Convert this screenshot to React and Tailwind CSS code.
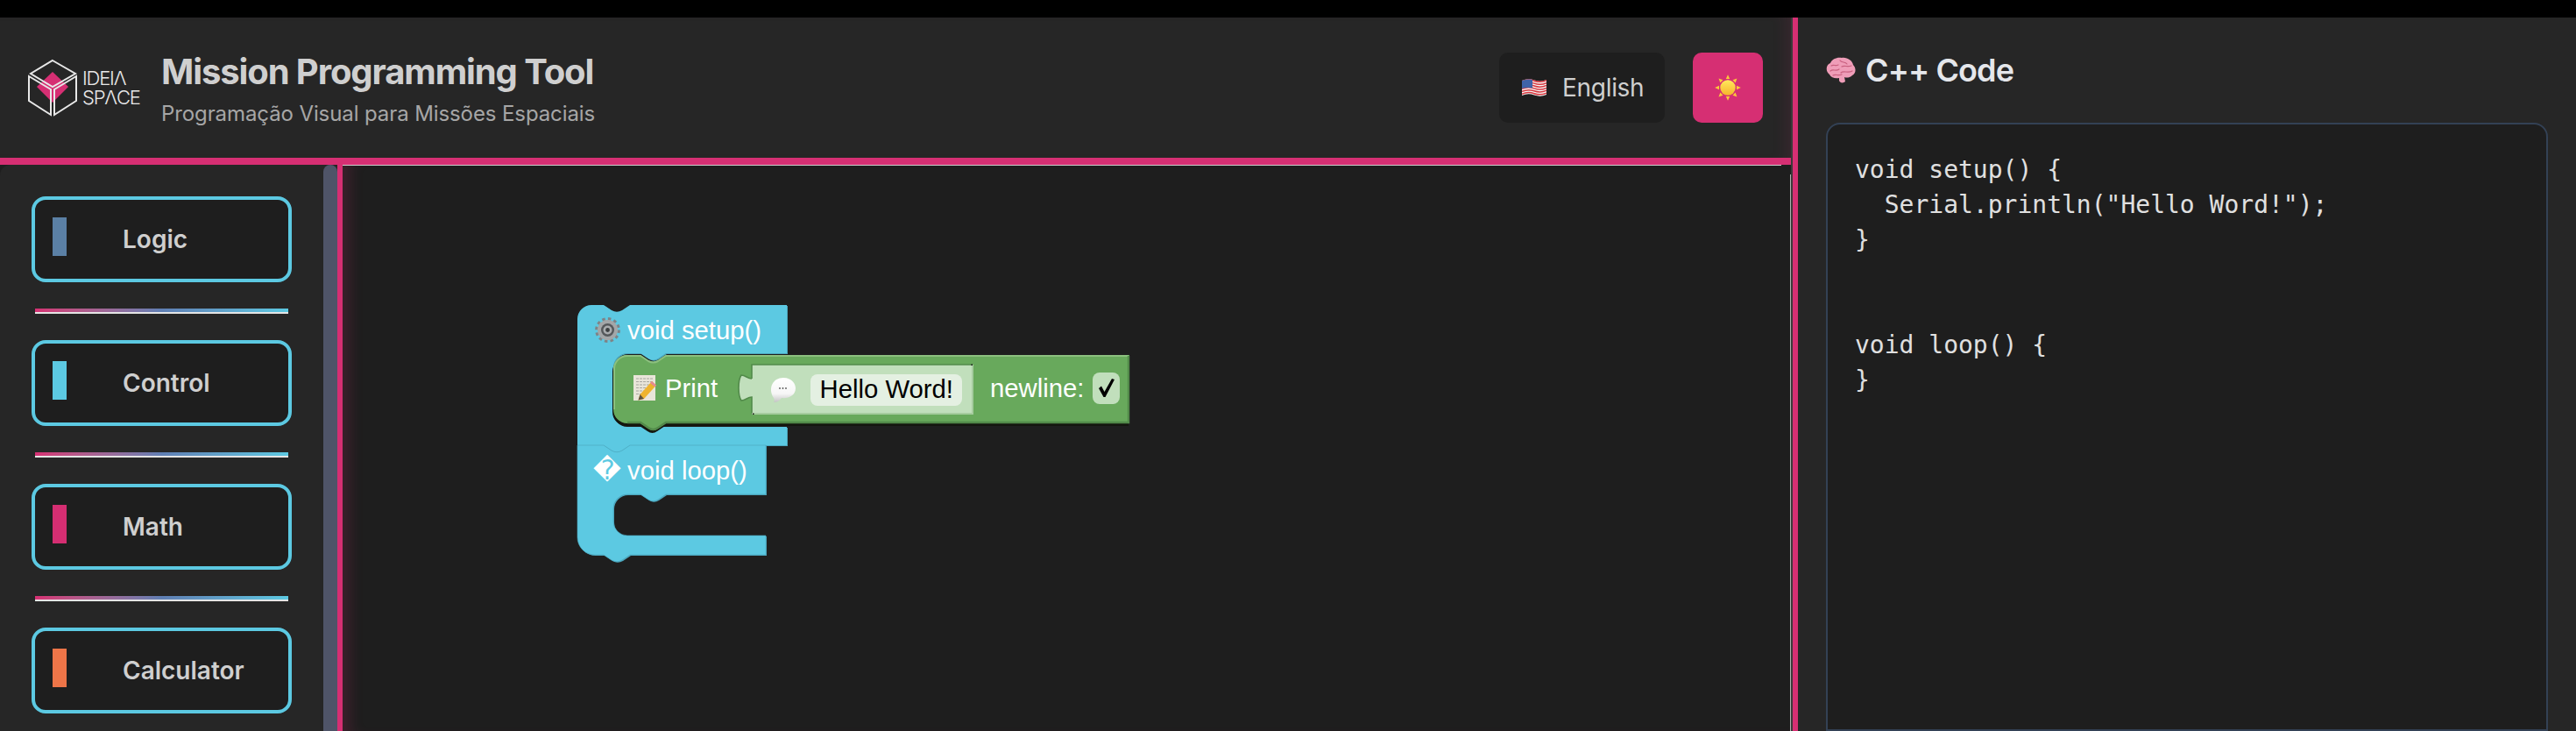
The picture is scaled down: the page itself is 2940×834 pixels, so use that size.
import React from "react";

const categories = [
  { name: "Logic", color: "bg-[#5b80a5]" },
  { name: "Control", color: "bg-[#5cc9e2]" },
  { name: "Math", color: "bg-[#d52e72]" },
  { name: "Calculator", color: "bg-[#ee7548]" },
];

const code = `void setup() {
  Serial.println("Hello Word!");
}


void loop() {
}`;

// contornos dos blocos em coordenadas da pagina
const setupPath =
  "M659 364 A16 16 0 0 1 675 348 H689 L698 354 Q704 357.5 710 354 L719 348 H898 V403 H760 L751 409 Q745.5 412.5 740 409 L731 403 H716 A16 16 0 0 0 700 419 V471 A16 16 0 0 0 716 487 H898 V508 H719 L710 514 Q704 517.5 698 514 L689 508 H659 Z";
const loopPath =
  "M659 508 H689 L698 514 Q704 517.5 710 514 L719 508 H874 V564 H760 L751 570 Q745.5 573.5 740 570 L731 564 H716 A16 16 0 0 0 700 580 V595 A16 16 0 0 0 716 611 H874 V633 H719 L710 639 Q704 642.5 698 639 L689 633 H679 A20 20 0 0 1 659 613 Z";
const printPath =
  "M700 421 A16 16 0 0 1 716 405 H731 L740 411 Q745.5 414 751 411 L760 405 H1289 V483 H760 L751 489 Q745.5 493 740 489 L731 483 H716 A16 16 0 0 1 700 467 Z";
const printTopEdge = "M701 467 V421 A15 15 0 0 1 716 406 H731 L740 412 Q745.5 415 751 412 L760 406 H1288";
const printBottomEdge = "M716 482 H731 L740 488 Q745.5 492 751 488 L760 482 H1288 V406";
const valuePath =
  "M858 416 H1110 V473 H858 V453 C853 453 851 457 846 457 C842 451 842 434 846 428 C851 428 853 432 858 432 Z";
const valueDarkEdge = "M858 432 C853 432 851 428 846 428 C842 434 842 451 846 457 C851 457 853 453 858 453 V473 M858 432 V416 H1110";
const valueLightEdge = "M858 472 H1110 V416";

const Logo = () => (
  <div className="flex items-center shrink-0">
    <svg viewBox="30 65 60 70" className="w-[60px] h-[70px] shrink-0">
      <path d="M60 82 L78 99 L60 117 L42 99 Z" fill="#d62f73" />
      <g fill="none" stroke="#e8e8e8" strokeWidth="2" strokeLinejoin="miter">
        <path d="M60 69 L86 84 L60 99 L35 84 Z" />
        <path d="M33 87 L58 102 V131 L33 115 Z" />
        <path d="M87 87 L62 102 V131 L87 115 Z" />
      </g>
    </svg>
    <div className="ml-[4px] w-[66px] text-[22px] leading-[22px] font-light tracking-[-1.2px] text-[#e8e8e8]">
      <div>IDEIΛ</div>
      <div>SPΛCE</div>
    </div>
  </div>
);

const Flag = () => (
  <svg viewBox="0 0 28 20" className="w-[28px] h-[20px] shrink-0">
    <path d="M0 2 Q7 -1 14 1.5 T28 1 V18 Q21 21 14 18.5 T0 19 Z" fill="#f4f4f4" />
    <g fill="none" stroke="#d8383f" strokeWidth="1.5">
      <path d="M0 2.7 Q7 -.3 14 2.2 T28 1.7" />
      <path d="M0 5.6 Q7 2.6 14 5.1 T28 4.6" />
      <path d="M0 8.5 Q7 5.5 14 8 T28 7.5" />
      <path d="M0 11.4 Q7 8.4 14 10.9 T28 10.4" />
      <path d="M0 14.3 Q7 11.3 14 13.8 T28 13.3" />
      <path d="M0 17.2 Q7 14.2 14 16.7 T28 16.2" />
    </g>
    <path d="M0 2 Q6 -.4 12 1 V10.5 Q6 9.2 0 11 Z" fill="#3f63a8" />
  </svg>
);

const Sun = () => (
  <svg viewBox="0 0 30 30" className="w-[30px] h-[30px]">
    <defs>
      <linearGradient id="sunFill" x1="0" y1="0" x2="0" y2="1">
        <stop offset="0" stopColor="#ffe95c" />
        <stop offset="1" stopColor="#f6b42c" />
      </linearGradient>
    </defs>
    <g fill="#fbc93a">
      {[0, 45, 90, 135, 180, 225, 270, 315].map((a) => (
        <path key={a} d="M12.8 5 L15 .2 L17.2 5 Z" transform={`rotate(${a} 15 15)`} />
      ))}
    </g>
    <circle cx="15" cy="15" r="8.7" fill="url(#sunFill)" />
  </svg>
);

const Brain = () => (
  <svg viewBox="0 0 34 30" className="w-[34px] h-[30px] shrink-0">
    <path
      d="M4 20 C-1 16 0 9 5 7 C7 2 13 0 18 1 C24 0 30 4 31 9 C35 13 34 19 30 21 C27 24 23 24 21 23 L22 28 C20 30 16 30 15 27 L15 24 C11 25 6 24 4 20 Z"
      fill="#ef9db8"
    />
    <g fill="none" stroke="#c9607f" strokeWidth="1.2" strokeLinecap="round">
      <path d="M6 10 C9 8 11 11 14 9" />
      <path d="M16 4 C18 7 22 5 24 8" />
      <path d="M5 16 C8 13 11 17 15 14" />
      <path d="M18 11 C21 9 25 12 29 10" />
      <path d="M17 18 C20 15 25 19 30 16" />
      <path d="M8 21 C11 19 14 22 18 20" />
    </g>
  </svg>
);

const Gear = () => (
  <g>
    <circle cx="693.5" cy="376.5" r="12.8" fill="none" stroke="#7f8386" strokeWidth="3.2" strokeDasharray="3.5 3.2" />
    <circle cx="693.5" cy="376.5" r="11.5" fill="#a3a6a8" />
    <circle cx="693.5" cy="376.5" r="7.5" fill="#55585b" />
    <circle cx="693.5" cy="376.5" r="5" fill="#a9acae" />
    <circle cx="693.5" cy="376.5" r="2.4" fill="#3d4042" />
  </g>
);

const Memo = () => (
  <g>
    <rect x="723" y="428" width="25" height="29" fill="#e9e5d9" />
    <g stroke="#8e8e88" strokeWidth="0.7" strokeDasharray="3 1">
      <path d="M726 432 H745 M726 435.5 H745 M726 439 H743 M726 442.5 H738 M726 446 H735 M726 449.5 H732" />
    </g>
    <path d="M744 435 L749 439.5 L735 455 L728.5 456.5 L730.5 450 Z" fill="#efb32e" />
    <path d="M744 435 L749 439.5 L747.5 441.5 L742 437 Z" fill="#e58a96" />
    <path d="M730.5 450 L735 455 L728.5 456.5 Z" fill="#5e5340" />
  </g>
);

const Bubble = () => (
  <g>
    <defs>
      <linearGradient id="bubbleFill" x1="0" y1="0" x2="0" y2="1">
        <stop offset="0" stopColor="#ffffff" />
        <stop offset="0.65" stopColor="#f6f6f6" />
        <stop offset="1" stopColor="#c4c4c4" />
      </linearGradient>
    </defs>
    <path d="M883 454 C876 443 882 431 894 431 C904 431 908 438 908 443 C908 451 900 455 892 454 C890 457 887 459 883 459 C884 457 884 456 883 454 Z" fill="url(#bubbleFill)" />
    <g fill="#555">
      <circle cx="890" cy="443" r="0.9" />
      <circle cx="893.5" cy="443" r="0.9" />
      <circle cx="897" cy="443" r="0.9" />
    </g>
  </g>
);

const Blocks = () => (
  <svg viewBox="651 338 650 310" className="absolute left-[260px] top-[150px] w-[650px] h-[310px]">
    <g fontFamily="'Liberation Sans', Arial, sans-serif" fontSize="29.3">
      <path d={setupPath} fill="#4ba6bd" transform="translate(1 1)" />
      <path d={setupPath} fill="#5cc9e2" />
      <text x="716" y="387" fill="#fff">void setup()</text>
      <Gear />

      <path d={loopPath} fill="#4ba6bd" transform="translate(1 1)" />
      <path d={loopPath} fill="#5cc9e2" stroke="#4ba6bd" strokeWidth="0.6" />
      <text x="716" y="547" fill="#fff">void loop()</text>
      <text x="677" y="547" fill="#fff" fontFamily="'DejaVu Sans', sans-serif" fontSize="31">�</text>

      <path d={printPath} fill="#14160f" transform="translate(-1 3)" />
      <path d={printPath} fill="#68a95c" />
      <path d={printTopEdge} fill="none" stroke="#8cc07f" strokeWidth="2" />
      <path d={printBottomEdge} fill="none" stroke="#528a4a" strokeWidth="2.4" />
      <Memo />
      <text x="759" y="453" fill="#fff">Print</text>

      <path d={valuePath} fill="#c1dfbc" />
      <path d={valueDarkEdge} fill="none" stroke="#528a4a" strokeWidth="1.6" />
      <path d={valueLightEdge} fill="none" stroke="#a6cc9f" strokeWidth="2" />
      <rect x="1108.5" y="415.5" width="1.5" height="1.5" fill="#111" />
      <rect x="859" y="471.5" width="1.5" height="1.5" fill="#111" />
      <Bubble />
      <rect x="925" y="427" width="173" height="36" rx="8" fill="#e4f0e2" />
      <text x="935.5" y="454" fill="#000">Hello Word!</text>

      <text x="1130" y="453" fill="#fff">newline:</text>
      <rect x="1247" y="425" width="31" height="36" rx="8" fill="#c1dfbc" />
      <path d="M1254 443 L1257 440.5 L1260.5 447 L1269 432 L1272 433 L1261.5 453 H1259.5 Z" fill="#000" />
    </g>
  </svg>
);

const App = () => {
  return (
    <div className="w-[2940px] h-screen flex flex-col overflow-hidden bg-black font-['Inter',sans-serif]">
      <div className="h-[20px] shrink-0 bg-black" />
      <div className="flex flex-1 min-h-0">
        {/* coluna esquerda */}
        <div className="w-[2046px] shrink-0 flex flex-col bg-[#262626] border-r-2 border-[#3a3a3a]">
          <header className="h-[168px] shrink-0 flex items-center justify-between border-b-[8px] border-[#d62f73] pl-[30px] pr-[32px] shadow-[inset_-16px_0_16px_-10px_rgba(214,47,115,0.1)]">
            <div className="flex items-center gap-[24px]">
              <Logo />
              <div className="pt-[7px]">
                <h1 className="text-[40px] leading-[48px] -mt-[3px] font-bold tracking-[-1.1px] text-[#cfcfcf]">Mission Programming Tool</h1>
                <p className="text-[24px] leading-[32px] mt-[8px] tracking-[-0.1px] text-[#a6a6a6]">Programação Visual para Missões Espaciais</p>
              </div>
            </div>
            <div className="flex items-center gap-[32px]">
              <button className="w-[189px] h-[80px] flex items-center gap-[18px] pl-[26px] rounded-[10px] bg-[#1e1e1e] text-[28px] tracking-[-0.3px] text-[#cfcfcf]">
                <Flag />
                English
              </button>
              <button className="w-[80px] h-[80px] flex items-center justify-center rounded-[10px] bg-[#d62f73]">
                <Sun />
              </button>
            </div>
          </header>

          <div className="flex flex-1 min-h-0 bg-[#1e1e1e]">
            <aside className="w-[369px] shrink-0 overflow-hidden rounded-tl-[12px] bg-[#262626] pt-[36px] pl-[36px]">
              {categories.map((cat, i) => (
                <div key={cat.name}>
                  {i > 0 && (
                    <div className="ml-[4px] my-[30px] w-[289px] h-[6px] border-b-2 border-[#e5e5e5] bg-gradient-to-r from-[#d62f73] via-[#5f7fb4] to-[#5cc9e2]" />
                  )}
                  <div className="w-[297px] h-[98px] flex items-center pl-[20px] rounded-[16px] border-[4px] border-[#5cc9e2] bg-[#1e1e1e]">
                    <span className={`w-[16px] h-[44px] mb-[6px] ${cat.color}`} />
                    <span className="ml-[64px] text-[28px] font-semibold text-[#cfcfcf]">{cat.name}</span>
                  </div>
                </div>
              ))}
            </aside>
            <div className="w-[16px] shrink-0 bg-[#262626]">
              <div className="h-full rounded-t-lg bg-[#4f5468]" />
            </div>
            <main className="relative flex-1 overflow-hidden border-l-[6px] border-l-[#d62f73] bg-[#1e1e1e] shadow-[inset_18px_0_16px_-10px_rgba(214,47,115,0.18)]">
              <Blocks />
              <div className="absolute left-0 top-0 right-[11px] h-px bg-[#cfcfcf]" />
              <div className="absolute right-0 top-[11px] bottom-0 w-px bg-[#b0b0b0]" />
            </main>
          </div>
        </div>

        {/* painel de codigo */}
        <section className="flex-1 flex flex-col min-w-0 border-l-[6px] border-[#d62f73] bg-[#262626] px-[32px] pt-[40px]">
          <h2 className="h-[40px] mb-[40px] flex items-center gap-[11px] text-[36px] font-semibold tracking-[-0.9px] text-[#e5e7eb]">
            <Brain />
            C++ Code
          </h2>
          <pre className="flex-1 rounded-t-[16px] border-2 border-[#334155] bg-[#1e1e1e] py-[32px] pl-[31px] pr-[32px] text-[28px] leading-[40px] text-[#e0e0e0] font-['DejaVu_Sans_Mono',monospace]">
            {code}
          </pre>
        </section>
      </div>
    </div>
  );
};

export default App;
